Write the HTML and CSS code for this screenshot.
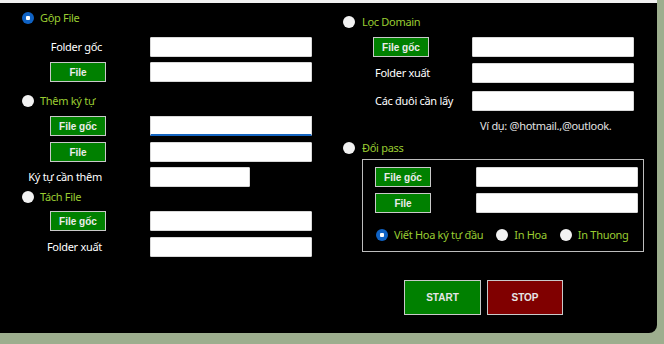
FILE: index.html
```html
<!DOCTYPE html>
<html lang="vi">
<head>
    <meta charset="UTF-8">
    <meta name="viewport" content="width=device-width, initial-scale=1.0">
    <title>Tool xử lý File</title>
    <link rel="stylesheet" href="styles.css">
</head>
<body>
    <div class="window">
        <div class="panel">
            <!-- Left column -->
            <div class="col left">
                <label class="opt opt-gop"><span class="dot checked"></span>Gộp File</label>
                <div class="row r1">
                    <span class="lbl">Folder gốc</span>
                    <input type="text" class="box">
                </div>
                <div class="row r2">
                    <button class="btn">File</button>
                    <input type="text" class="box">
                </div>

                <label class="opt opt-them"><span class="dot"></span>Thêm ký tự</label>
                <div class="row r3">
                    <button class="btn">File gốc</button>
                    <input type="text" class="box focus">
                </div>
                <div class="row r4">
                    <button class="btn">File</button>
                    <input type="text" class="box">
                </div>
                <div class="row r5">
                    <span class="lbl">Ký tự cần thêm</span>
                    <input type="text" class="box short">
                </div>

                <label class="opt opt-tach"><span class="dot"></span>Tách File</label>
                <div class="row r6">
                    <button class="btn">File gốc</button>
                    <input type="text" class="box">
                </div>
                <div class="row r7">
                    <span class="lbl">Folder xuất</span>
                    <input type="text" class="box">
                </div>
            </div>

            <!-- Right column -->
            <div class="col right">
                <label class="opt opt-loc"><span class="dot"></span>Lọc Domain</label>
                <div class="row r1">
                    <button class="btn">File gốc</button>
                    <input type="text" class="box">
                </div>
                <div class="row r2">
                    <span class="lbl">Folder xuất</span>
                    <input type="text" class="box">
                </div>
                <div class="row r3">
                    <span class="lbl">Các đuôi cần lấy</span>
                    <input type="text" class="box">
                </div>
                <p class="hint">Ví dụ: @hotmail.,@outlook.</p>

                <label class="opt opt-doi"><span class="dot"></span>Đổi pass</label>
                <div class="group">
                    <div class="row g1">
                        <button class="btn">File gốc</button>
                        <input type="text" class="box">
                    </div>
                    <div class="row g2">
                        <button class="btn">File</button>
                        <input type="text" class="box">
                    </div>
                    <div class="cases">
                        <label class="opt"><span class="dot checked"></span>Viết Hoa ký tự đầu</label>
                        <label class="opt"><span class="dot"></span>In Hoa</label>
                        <label class="opt"><span class="dot"></span>In Thuong</label>
                    </div>
                </div>

                <div class="actions">
                    <button class="act start">START</button>
                    <button class="act stop">STOP</button>
                </div>
            </div>
        </div>
    </div>
</body>
</html>
```

FILE: styles.css
```css
/* Reset */
* {
    margin: 0;
    padding: 0;
    box-sizing: border-box;
}

body {
    font-family: 'Noto Sans', 'Open Sans', sans-serif;
    font-size: 11px;
    letter-spacing: -0.3px;
    background-color: #9dae8e; /* desktop behind the form */
    color: #fff;
    width: 664px;
    height: 344px;
    overflow: hidden;
}

.window {
    width: 657px;
    border-top: 3px solid #f0f0f0;
}

.panel {
    display: flex;
    height: 330px;
    background-color: #000;
    border-bottom-right-radius: 8px;
}

.col {
    display: flex;
    flex-direction: column;
}

.left {
    width: 330px;
}

.right {
    flex: 1;
}

/* Radio options */
.opt {
    display: flex;
    align-items: center;
    height: 14px;
    line-height: 14px;
    color: #9acd32;
    white-space: nowrap;
}

.dot {
    width: 12px;
    height: 12px;
    border-radius: 50%;
    background-color: #f2f2f2;
    margin-right: 6px;
    flex-shrink: 0;
}

.dot.checked {
    background: radial-gradient(circle, #fff 0 2px, #0f62c4 2.5px);
}

.left .opt {
    padding-left: 22px;
}

.opt-gop { margin-top: 8px; }
.opt-them { margin-top: 12px; }
.opt-tach { margin-top: 3px; }

/* Form rows */
.row {
    display: grid;
    align-items: center;
    height: 20px;
}

.left .row {
    grid-template-columns: 106px 162px;
    column-gap: 44px;
}

.left .r1 { margin-top: 12px; }
.left .r2 { margin-top: 5px; }
.left .r3 { margin-top: 8px; }
.left .r4 { margin-top: 6px; }
.left .r5 { margin-top: 5px; }
.left .r6 { margin-top: 7px; }
.left .r7 { margin-top: 6px; }

.lbl {
    white-space: nowrap;
    line-height: 14px;
}

.left .lbl {
    justify-self: end;
    padding-right: 4px;
}

.btn {
    justify-self: end;
    width: 56px;
    height: 20px;
    background-color: #008000;
    border: 1px solid #c9c9c9;
    color: #ececec;
    font-family: 'Liberation Sans', Arial, sans-serif;
    font-weight: bold;
    font-size: 10px;
    letter-spacing: 0;
}

.box {
    width: 162px;
    height: 20px;
    background-color: #fff;
    border: 1px solid #d8d8d8;
    border-radius: 1px;
}

.box.short {
    width: 100px;
}

.box.focus {
    border-bottom: 2px solid #1565c0;
}

/* Right column */
.right .opt {
    padding-left: 13px;
}

.right .opt .dot {
    margin-right: 7px;
}

.opt-loc { margin-top: 12px; }
.opt-doi { margin-top: 8px; }

.right > .row {
    grid-template-columns: 56px 162px;
    column-gap: 43px;
    padding-left: 43px;
}

.right > .row .lbl {
    padding-left: 2px;
}

.right .r1 { margin-top: 8px; }
.right .r2 { margin-top: 6px; }
.right .r3 { margin-top: 8px; }

.hint {
    margin-top: 8px;
    padding-left: 150px;
    height: 14px;
    line-height: 14px;
    color: #e2e2e2;
}

/* Group box for Đổi pass */
.group {
    margin-top: 4px;
    margin-left: 32px;
    width: 282px;
    height: 93px;
    border: 1px solid #bdbdbd;
    padding: 7px 0 0 12px;
}

.group .row {
    grid-template-columns: 56px 162px;
    column-gap: 45px;
}

.group .g2 { margin-top: 6px; }

.cases {
    display: flex;
    margin-top: 15px;
    padding-left: 1px;
}

.cases .opt {
    padding-left: 0;
    margin-right: 13px;
}

.cases .opt .dot {
    margin-right: 6px;
}

/* Start / Stop */
.actions {
    display: flex;
    gap: 6px;
    margin-top: 28px;
    padding-left: 74px;
}

.act {
    width: 77px;
    height: 35px;
    border: 1px solid #c9c9c9;
    color: #e6e6e6;
    font-family: 'Liberation Sans', Arial, sans-serif;
    font-weight: bold;
    font-size: 10px;
    letter-spacing: 0;
}

.start {
    background-color: #008000;
}

.stop {
    width: 76px;
    background-color: #800000;
}
```
